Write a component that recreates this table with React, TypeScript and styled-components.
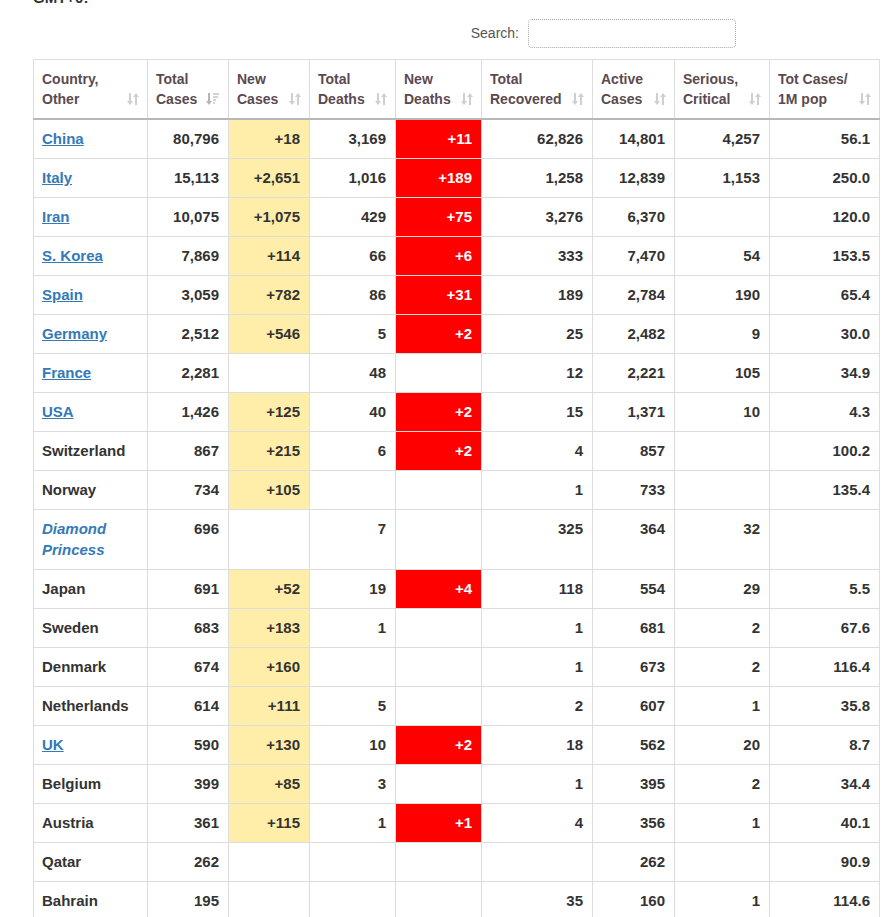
import React from 'react';
import styled, { createGlobalStyle } from 'styled-components';

const GlobalStyle = createGlobalStyle`
    html, body {
        margin: 0;
        padding: 0;
        background: #fff;
        font-family: "Liberation Sans", Arial, sans-serif;
    }
`;

const Page = styled.div`
    padding: 0 10px 0 33px;
    overflow: hidden;
`;

const Note = styled.div`
    margin-top: -12px;
    height: 20px;
    line-height: 20px;
    font-size: 15px;
    font-weight: bold;
    color: #333;
`;

const FilterBar = styled.div`
    display: flex;
    justify-content: flex-end;
    align-items: center;
    gap: 9px;
    margin-top: 10px;
    padding-right: 143px;
    height: 30px;
    margin-bottom: 11px;
`;

const SearchLabel = styled.label`
    font-size: 14px;
    color: #555;
`;

const SearchInput = styled.input`
    width: 208px;
    height: 29px;
    box-sizing: border-box;
    border: 1px dotted #aaa;
    border-radius: 4px;
    padding: 0 6px;
    font: inherit;
`;

const Table = styled.table`
    width: 846px;
    table-layout: fixed;
    border-collapse: collapse;
    border: 1px solid #ddd;
`;

const HeadCell = styled.th`
    border: 1px solid #ddd;
    border-bottom: 2px solid #b8b8b8;
    padding: 9px 8px 9px 8px;
    text-align: left;
    vertical-align: bottom;
    font-size: 14px;
    font-weight: bold;
    line-height: 20px;
    color: #5b4a50;
`;

const HeadInner = styled.div`
    display: flex;
    justify-content: space-between;
    align-items: flex-end;
`;

const IconBox = styled.span`
    display: inline-flex;
    padding-bottom: 3px;
`;

type Tone = 'plain' | 'yellow' | 'red';

const Cell = styled.td<{ $tone?: Tone; $left?: boolean }>`
    border: 1px solid #ddd;
    padding: 8px 9px 9px 8px;
    line-height: 21px;
    vertical-align: top;
    font-size: 15px;
    font-weight: bold;
    text-align: ${(p) => (p.$left ? 'left' : 'right')};
    color: ${(p) => (p.$tone === 'red' ? '#fff' : '#333')};
    background: ${(p) =>
        p.$tone === 'yellow' ? '#ffeeaa' : p.$tone === 'red' ? '#ff0000' : '#fff'};
`;

const CountryLink = styled.a`
    color: #337ab7;
    text-decoration: underline;
`;

const Ship = styled.span`
    color: #337ab7;
    font-style: italic;
`;

const SortIcon = () => (
    <svg width="12" height="14" viewBox="0 0 12 14">
        <g fill="#cfcfcf">
            <rect x="2" y="1" width="2" height="9" />
            <polygon points="0,9 6,9 3,13" />
            <rect x="8" y="4" width="2" height="9" />
            <polygon points="6,5 12,5 9,1" />
        </g>
    </svg>
);

const SortDescIcon = () => (
    <svg width="14" height="14" viewBox="0 0 14 14">
        <g fill="#b5b5b5">
            <rect x="2" y="1" width="2" height="9" />
            <polygon points="0,9 6,9 3,13" />
        </g>
        <g fill="#d4d4d4">
            <rect x="7" y="1" width="6" height="2" />
            <rect x="7" y="4" width="5" height="2" />
            <rect x="7" y="7" width="3" height="2" />
            <rect x="7" y="10" width="2" height="2" />
        </g>
    </svg>
);

const columns: { label: [string, string]; width: number; sorted?: boolean }[] = [
    { label: ['Country,', 'Other'], width: 114 },
    { label: ['Total', 'Cases'], width: 81, sorted: true },
    { label: ['New', 'Cases'], width: 81 },
    { label: ['Total', 'Deaths'], width: 86 },
    { label: ['New', 'Deaths'], width: 86 },
    { label: ['Total', 'Recovered'], width: 111 },
    { label: ['Active', 'Cases'], width: 82 },
    { label: ['Serious,', 'Critical'], width: 95 },
    { label: ['Tot Cases/', '1M pop'], width: 110 },
];

type Kind = 'link' | 'text' | 'ship';

const rows: [string, Kind, string[]][] = [
    ['China', 'link', ['80,796', '+18', '3,169', '+11', '62,826', '14,801', '4,257', '56.1']],
    ['Italy', 'link', ['15,113', '+2,651', '1,016', '+189', '1,258', '12,839', '1,153', '250.0']],
    ['Iran', 'link', ['10,075', '+1,075', '429', '+75', '3,276', '6,370', '', '120.0']],
    ['S. Korea', 'link', ['7,869', '+114', '66', '+6', '333', '7,470', '54', '153.5']],
    ['Spain', 'link', ['3,059', '+782', '86', '+31', '189', '2,784', '190', '65.4']],
    ['Germany', 'link', ['2,512', '+546', '5', '+2', '25', '2,482', '9', '30.0']],
    ['France', 'link', ['2,281', '', '48', '', '12', '2,221', '105', '34.9']],
    ['USA', 'link', ['1,426', '+125', '40', '+2', '15', '1,371', '10', '4.3']],
    ['Switzerland', 'text', ['867', '+215', '6', '+2', '4', '857', '', '100.2']],
    ['Norway', 'text', ['734', '+105', '', '', '1', '733', '', '135.4']],
    ['Diamond Princess', 'ship', ['696', '', '7', '', '325', '364', '32', '']],
    ['Japan', 'text', ['691', '+52', '19', '+4', '118', '554', '29', '5.5']],
    ['Sweden', 'text', ['683', '+183', '1', '', '1', '681', '2', '67.6']],
    ['Denmark', 'text', ['674', '+160', '', '', '1', '673', '2', '116.4']],
    ['Netherlands', 'text', ['614', '+111', '5', '', '2', '607', '1', '35.8']],
    ['UK', 'link', ['590', '+130', '10', '+2', '18', '562', '20', '8.7']],
    ['Belgium', 'text', ['399', '+85', '3', '', '1', '395', '2', '34.4']],
    ['Austria', 'text', ['361', '+115', '1', '+1', '4', '356', '1', '40.1']],
    ['Qatar', 'text', ['262', '', '', '', '', '262', '', '90.9']],
    ['Bahrain', 'text', ['195', '', '', '', '35', '160', '1', '114.6']],
];

const toneFor = (index: number, value: string): Tone => {
    if (!value) return 'plain';
    if (index === 1) return 'yellow';
    if (index === 3) return 'red';
    return 'plain';
};

const CountryName = ({ name, kind }: { name: string; kind: Kind }) => {
    if (kind === 'link') return <CountryLink href="#">{name}</CountryLink>;
    if (kind === 'ship') {
        const [first, second] = name.split(' ');
        return (
            <Ship>
                {first}
                <br />
                {second}
            </Ship>
        );
    }
    return <>{name}</>;
};

const App = () => (
    <>
        <GlobalStyle />
        <Page>
            <Note>GMT+0:</Note>
            <FilterBar>
                <SearchLabel htmlFor="search">Search:</SearchLabel>
                <SearchInput id="search" type="search" />
            </FilterBar>
            <Table>
                <colgroup>
                    {columns.map((c) => (
                        <col key={c.label.join()} style={{ width: c.width }} />
                    ))}
                </colgroup>
                <thead>
                    <tr>
                        {columns.map((c) => (
                            <HeadCell key={c.label.join()}>
                                <HeadInner>
                                    <span>
                                        {c.label[0]}
                                        <br />
                                        {c.label[1]}
                                    </span>
                                    <IconBox>{c.sorted ? <SortDescIcon /> : <SortIcon />}</IconBox>
                                </HeadInner>
                            </HeadCell>
                        ))}
                    </tr>
                </thead>
                <tbody>
                    {rows.map(([name, kind, values]) => (
                        <tr key={name}>
                            <Cell $left>
                                <CountryName name={name} kind={kind} />
                            </Cell>
                            {values.map((v, i) => (
                                <Cell key={i} $tone={toneFor(i, v)}>
                                    {v}
                                </Cell>
                            ))}
                        </tr>
                    ))}
                </tbody>
            </Table>
        </Page>
    </>
);

export default App;
